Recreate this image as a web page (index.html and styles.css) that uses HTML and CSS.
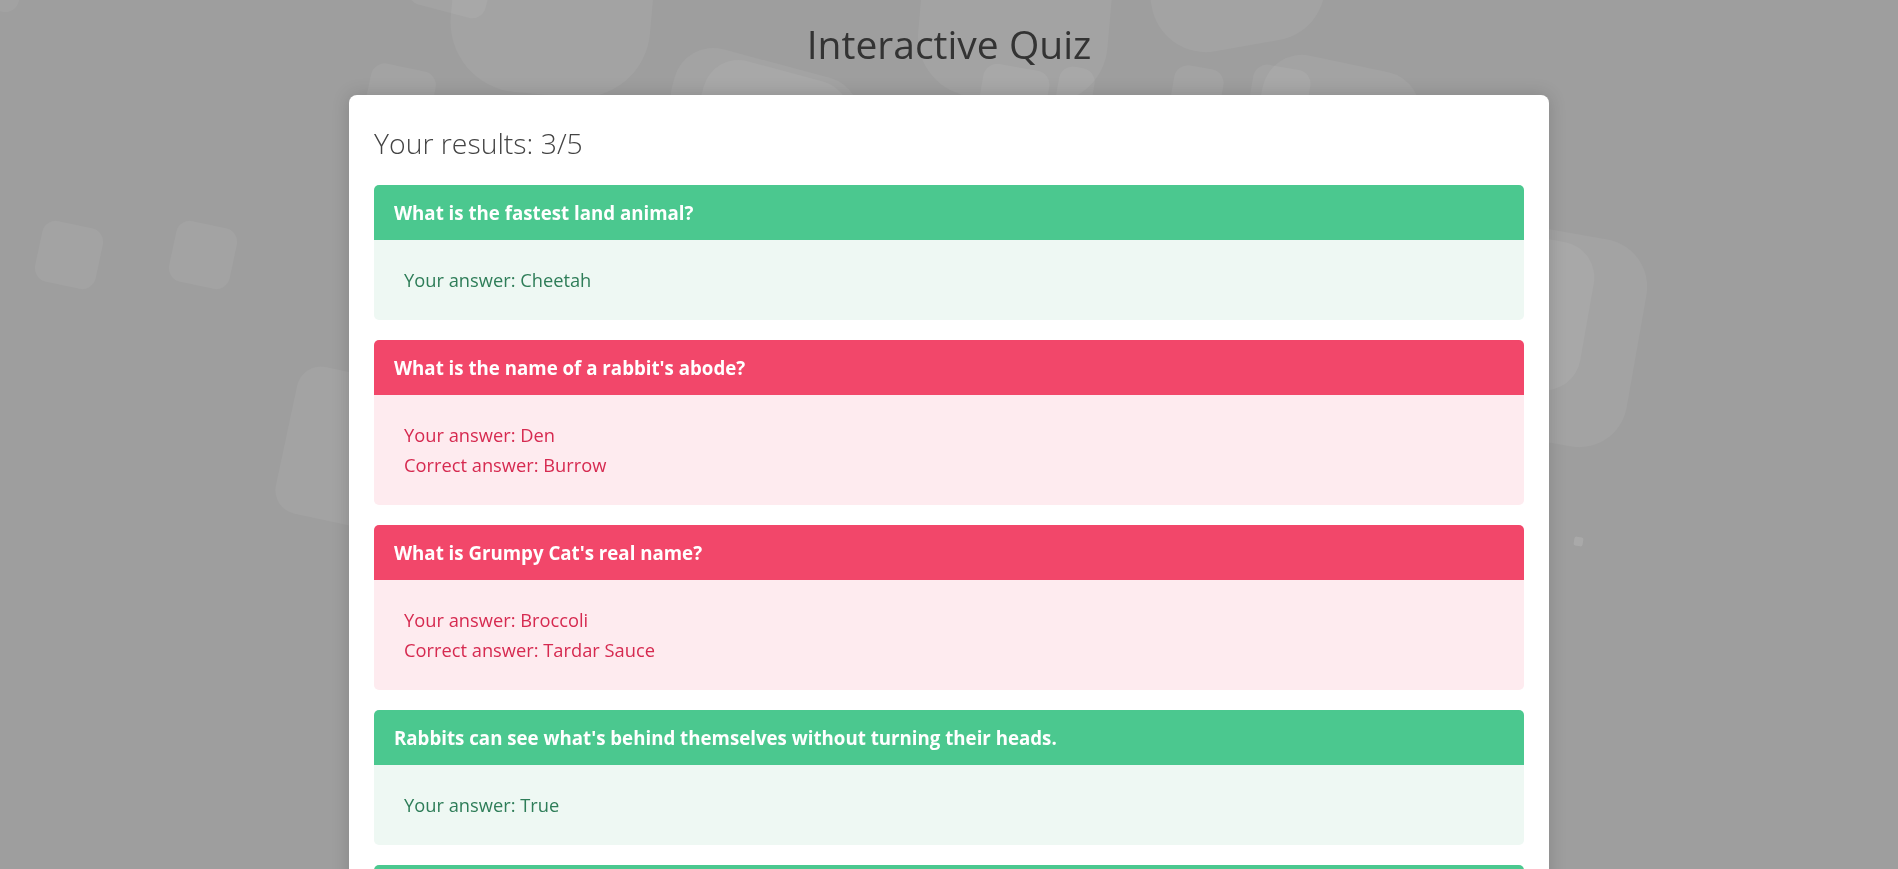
FILE: index.html
```html
<!DOCTYPE html>
<html lang="en">
<head>
<meta charset="utf-8">
<title>Interactive Quiz</title>
<link rel="stylesheet" href="styles.css">
</head>
<body>
<div class="bg" aria-hidden="true">
  <span class="shape" style="left:-40px;top:-38px;width:62px;height:46px;transform:rotate(15deg);opacity:.9"></span>
  <span class="shape" style="left:455px;top:-150px;width:200px;height:245px;border-radius:70px;transform:rotate(5deg)"></span>
  <span class="shape" style="left:410px;top:-40px;width:80px;height:52px;transform:rotate(15deg)"></span>
  <span class="shape" style="left:367px;top:67px;width:66px;height:60px;transform:rotate(12deg)"></span>
  <span class="shape" style="left:670px;top:62px;width:190px;height:90px;border-radius:40px;transform:rotate(15deg)"></span>
  <span class="shape" style="left:700px;top:70px;width:150px;height:80px;border-radius:36px;transform:rotate(15deg)"></span>
  <span class="shape" style="left:920px;top:-70px;width:190px;height:170px;border-radius:60px;transform:rotate(5deg)"></span>
  <span class="shape" style="left:1145px;top:-125px;width:175px;height:172px;border-radius:55px;transform:rotate(-10deg)"></span>
  <span class="shape" style="left:980px;top:67px;width:67px;height:60px;transform:rotate(10deg)"></span>
  <span class="shape" style="left:1056px;top:67px;width:36px;height:60px;transform:rotate(10deg)"></span>
  <span class="shape" style="left:1171px;top:67px;width:50px;height:60px;transform:rotate(10deg)"></span>
  <span class="shape" style="left:1250px;top:67px;width:58px;height:60px;transform:rotate(10deg)"></span>
  <span class="shape" style="left:1260px;top:63px;width:160px;height:90px;border-radius:40px;transform:rotate(12deg)"></span>
  <span class="shape" style="left:38px;top:224px;width:62px;height:62px;transform:rotate(12deg);opacity:1.2"></span>
  <span class="shape" style="left:172px;top:224px;width:62px;height:62px;transform:rotate(12deg)"></span>
  <span class="shape" style="left:285px;top:375px;width:140px;height:150px;border-radius:24px;transform:rotate(12deg)"></span>
  <span class="shape" style="left:1450px;top:230px;width:188px;height:210px;border-radius:48px;transform:rotate(10deg)"></span>
  <span class="shape" style="left:1460px;top:236px;width:128px;height:150px;border-radius:36px;transform:rotate(10deg)"></span>
  <span class="shape dot" style="left:1574px;top:537px;width:9px;height:9px;transform:rotate(10deg)"></span>
</div>

<main class="page">
  <h1 class="title">Interactive Quiz</h1>
  <section class="card">
    <h2 class="score">Your results: 3/5</h2>
    <div class="result correct">
      <div class="result-head">What is the fastest land animal?</div>
      <div class="result-body"><p>Your answer: Cheetah</p></div>
    </div>
    <div class="result wrong">
      <div class="result-head">What is the name of a rabbit's abode?</div>
      <div class="result-body"><p>Your answer: Den</p><p>Correct answer: Burrow</p></div>
    </div>
    <div class="result wrong">
      <div class="result-head">What is Grumpy Cat's real name?</div>
      <div class="result-body"><p>Your answer: Broccoli</p><p>Correct answer: Tardar Sauce</p></div>
    </div>
    <div class="result correct">
      <div class="result-head">Rabbits can see what's behind themselves without turning their heads.</div>
      <div class="result-body"><p>Your answer: True</p></div>
    </div>
    <div class="result correct">
      <div class="result-head">A group of cats is called a clowder.</div>
      <div class="result-body"><p>Your answer: True</p></div>
    </div>
  </section>
</main>
</body>
</html>
```
FILE: styles.css
```css
* { box-sizing: border-box; }
html, body { margin: 0; padding: 0; }
body {
  background: #9e9e9e;
  font-family: "Open Sans", "Noto Sans", sans-serif;
  color: #333;
  overflow: hidden;
}
.bg {
  position: fixed;
  inset: 0;
  overflow: hidden;
  z-index: 0;
  pointer-events: none;
}
.shape {
  position: absolute;
  display: block;
  border-radius: 14px;
  background: rgba(255, 255, 255, 0.055);
}
.shape.dot { border-radius: 2px; background: rgba(255, 255, 255, 0.12); }

.page {
  position: relative;
  z-index: 1;
  padding-top: 21px;
}
.title {
  margin: 0 0 27px;
  text-align: center;
  font-size: 39px;
  font-weight: 500;
  line-height: 1.2;
  color: #333;
}
.card {
  width: 1200px;
  margin: 0 auto;
  background: #fff;
  border-radius: 8px;
  padding: 25px;
  box-shadow: 0 0 18px rgba(0, 0, 0, 0.16);
}
.score {
  margin: 6px 0 25px;
  font-size: 28.4px;
  font-weight: 300;
  line-height: 1.2;
  color: #444;
}
.result {
  border-radius: 5px;
  overflow: hidden;
  margin-bottom: 20px;
}
.result-head {
  padding: 13px 20px 12px;
  font-size: 18.7px;
  font-weight: 700;
  line-height: 30px;
  color: #fff;
}
.result-body {
  padding: 25px 30px;
  font-size: 18.3px;
  line-height: 30px;
}
.result-body p { margin: 0; }
.correct .result-head { background: #4bc88f; }
.correct .result-body { background: #eef8f3; color: #2e7d58; }
.wrong .result-head { background: #f2476a; }
.wrong .result-body { background: #feebef; color: #d62a50; }
```
